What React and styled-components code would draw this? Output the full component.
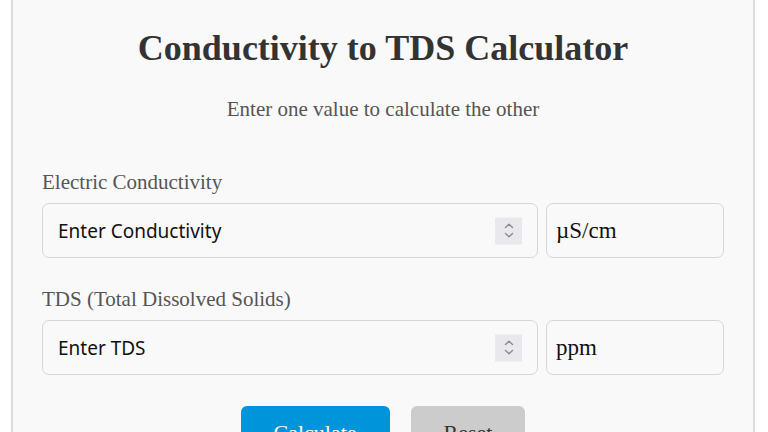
import React from "react";
import styled, { createGlobalStyle } from "styled-components";

const Global = createGlobalStyle`
  html, body { margin: 0; padding: 0; background: #ffffff; }
  body { font-family: "Liberation Serif", "Times New Roman", serif; overflow: hidden; }
`;

const Page = styled.div`
  padding: 0 13px 0 11px;
`;

const Card = styled.div`
  background: #f9f9f9;
  border: 2px solid #dcdcdc;
  border-top: none;
  padding: 27px 29px 40px;
  display: flex;
  flex-direction: column;
`;

const Title = styled.h1`
  margin: 0;
  text-align: center;
  font-size: 36px;
  line-height: 42px;
  font-weight: bold;
  color: #333;
`;

const Subtitle = styled.p`
  margin: 28px 0 0;
  text-align: center;
  font-size: 21px;
  line-height: 24px;
  color: #555;
`;

const Field = styled.div`
  margin-top: ${(p) => p.$top}px;
  display: flex;
  flex-direction: column;
`;

const Label = styled.label`
  font-size: 21px;
  line-height: 24px;
  color: #555;
  margin-bottom: 9px;
`;

const Row = styled.div`
  display: grid;
  grid-template-columns: 1fr 178px;
  gap: 8px;
`;

const InputWrap = styled.div`
  position: relative;
`;

const Input = styled.input`
  box-sizing: border-box;
  width: 100%;
  height: 55px;
  border: 1px solid #d6d6d6;
  border-radius: 7px;
  background: #f9f9f9;
  padding: 0 50px 0 15px;
  font-family: "Noto Sans", "Open Sans", sans-serif;
  font-size: 19px;
  color: #111;
  outline: none;
  &::placeholder { color: #111; opacity: 1; }
`;

const Spin = styled.span`
  position: absolute;
  right: 16px;
  top: 50%;
  transform: translateY(-50%);
  width: 27px;
  height: 27px;
  background: #e9e9ed;
  display: flex;
  align-items: center;
  justify-content: center;
`;

const Unit = styled.div`
  box-sizing: border-box;
  height: 55px;
  border: 1px solid #d6d6d6;
  border-radius: 7px;
  background: #f9f9f9;
  padding: 0 9px;
  display: flex;
  align-items: center;
  font-size: 23px;
  color: #111;
`;

const Buttons = styled.div`
  margin-top: 31px;
  display: flex;
  justify-content: center;
  gap: 21px;
`;

const Button = styled.button`
  height: 54px;
  padding: 0 33px;
  border: none;
  border-radius: 6px;
  font-family: "Liberation Serif", serif;
  font-size: 22px;
  background: ${(p) => (p.$primary ? "#0095da" : "#cccccc")};
  color: ${(p) => (p.$primary ? "#ffffff" : "#333333")};
`;

const SpinIcon = () => (
  <svg width="12" height="18" viewBox="0 0 12 18" fill="none" stroke="#8a8a8f" strokeWidth="1.4" strokeLinecap="round" strokeLinejoin="round">
    <path d="M2.5 6 L6 2.8 L9.5 6" />
    <path d="M2.5 12 L6 15.2 L9.5 12" />
  </svg>
);

const NumberField = ({ top, label, placeholder, unit }) => (
  <Field $top={top}>
    <Label>{label}</Label>
    <Row>
      <InputWrap>
        <Input type="text" placeholder={placeholder} />
        <Spin><SpinIcon /></Spin>
      </InputWrap>
      <Unit>{unit}</Unit>
    </Row>
  </Field>
);

export default function App() {
  return (
    <Page>
      <Global />
      <Card>
        <Title>Conductivity to TDS Calculator</Title>
        <Subtitle>Enter one value to calculate the other</Subtitle>
        <NumberField top={49} label="Electric Conductivity" placeholder="Enter Conductivity" unit="µS/cm" />
        <NumberField top={29} label="TDS (Total Dissolved Solids)" placeholder="Enter TDS" unit="ppm" />
        <Buttons>
          <Button $primary>Calculate</Button>
          <Button>Reset</Button>
        </Buttons>
      </Card>
    </Page>
  );
}
